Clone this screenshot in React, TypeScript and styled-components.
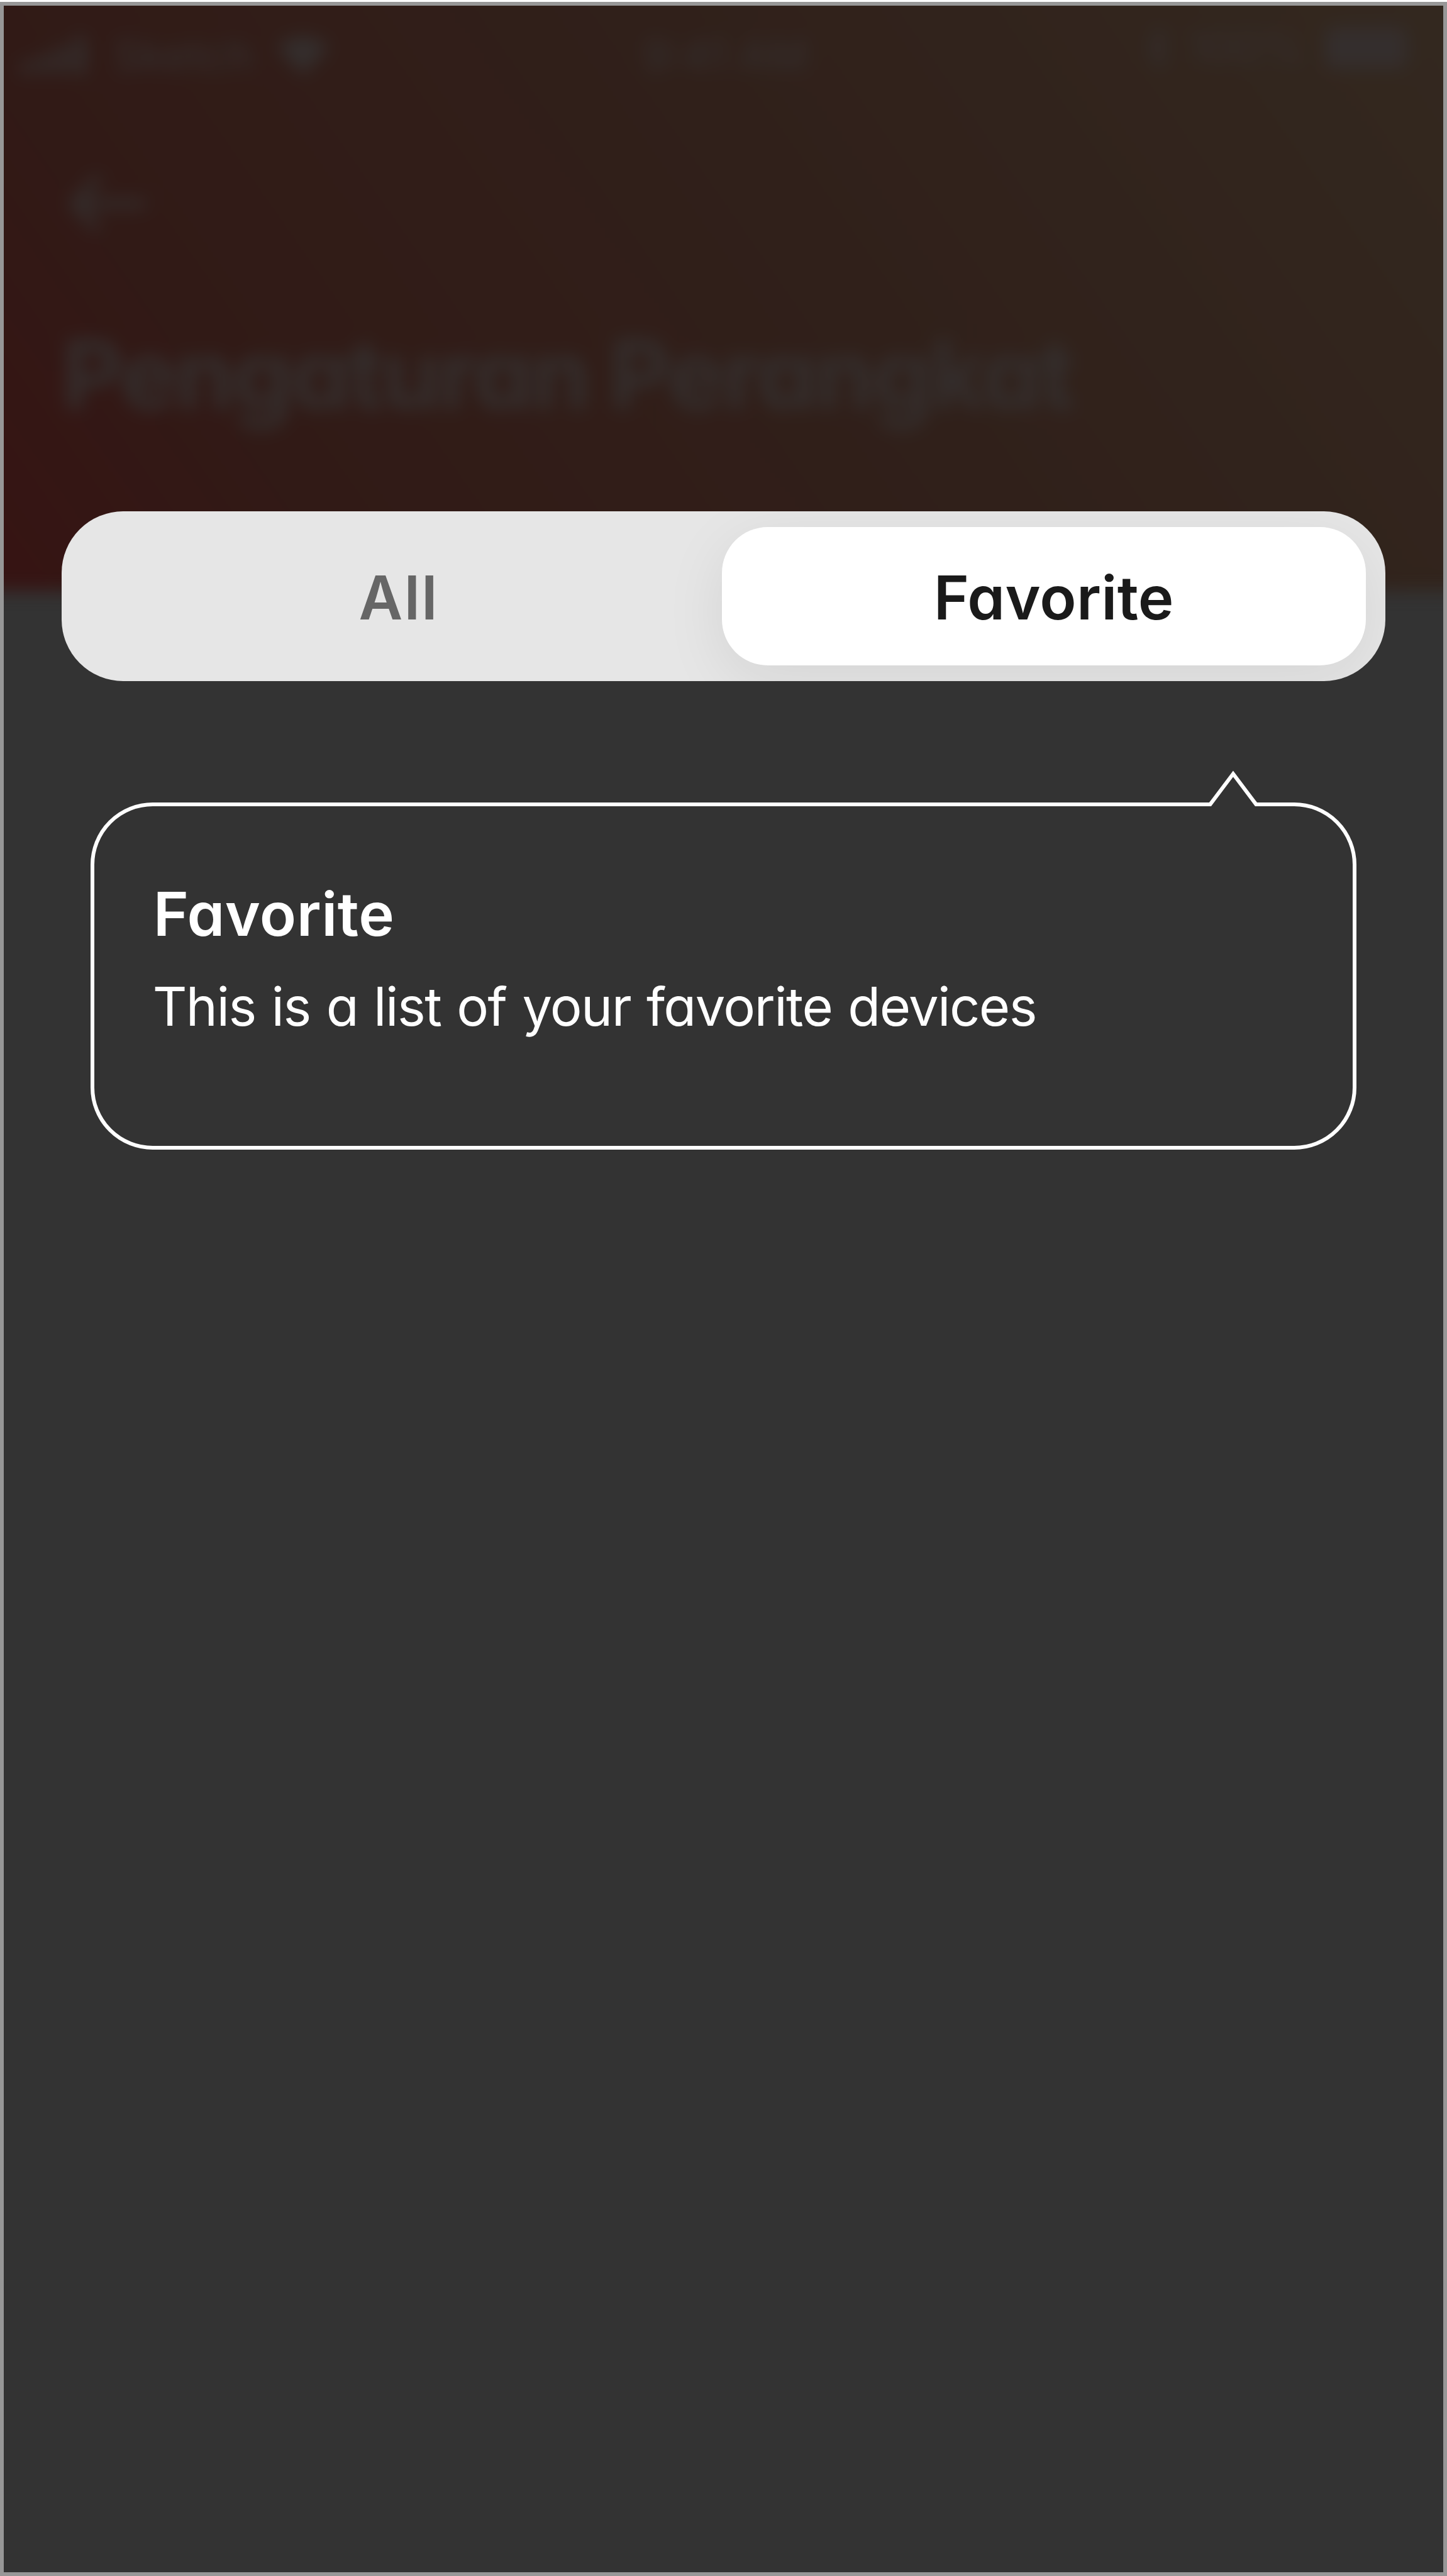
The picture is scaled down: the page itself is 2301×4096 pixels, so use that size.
import React from 'react';
import styled, { createGlobalStyle } from 'styled-components';

const SCALE = 0.9987;
const u = (n: number) => `${+(n * SCALE).toFixed(2)}px`;

const GlobalStyle = createGlobalStyle`
  *, *::before, *::after { box-sizing: border-box; }
  html, body { margin: 0; padding: 0; background: #fff; }
  body { font-family: Inter, "Noto Sans", sans-serif; font-feature-settings: "cv11" 1; }
`;

const Page = styled.div`
  width: 2301px;
  height: 4096px;
  padding-top: 3px;
  background: #fff;
  overflow: hidden;
`;

const Screen = styled.div`
  display: grid;
  grid-template: minmax(0, 1fr) / minmax(0, 1fr);
  height: 100%;
  border: 6px solid #979797;
  background: #333;
`;

const Backdrop = styled.div`
  grid-area: 1 / 1;
  overflow: hidden;
`;

const Header = styled.header`
  margin: ${u(-60)} ${u(-60)} 0;
  height: ${u(991)};
  padding: ${u(60)} ${u(60)} 0;
  background: linear-gradient(55deg, #361413 3%, #311a16 21%, #30201a 56%, #33281f 97%);
  filter: blur(${u(14)});
  color: #342e2d;
`;

const StatusBar = styled.div`
  display: grid;
  grid-template-columns: 1fr auto 1fr;
  align-items: center;
  height: ${u(158)};
  padding: 0 ${u(40)} 0 ${u(24)};
  font: 500 ${u(68)}/1 Inter, sans-serif;
`;

const StatusGroup = styled.div<{ $end?: boolean }>`
  display: flex;
  align-items: center;
  gap: ${p => (p.$end ? u(32) : u(38))};
  justify-content: ${p => (p.$end ? 'flex-end' : 'flex-start')};
  padding-bottom: ${p => (p.$end ? u(24) : '0')};
`;

const Clock = styled.span`
  padding-left: ${u(22)};
`;

const HeaderBody = styled.div`
  display: flex;
  flex-direction: column;
  align-items: flex-start;
  padding: ${u(100)} ${u(92)} 0;
`;

const HeaderTitle = styled.h1`
  margin: ${u(130)} 0 0;
  font-size: ${u(152)};
  line-height: ${u(180)};
  font-weight: 700;
  white-space: nowrap;
  letter-spacing: ${u(-3.4)};
`;

const Content = styled.main`
  grid-area: 1 / 1;
  z-index: 1;
  display: flex;
  flex-direction: column;
  padding: ${u(805)} ${u(92)} 0;
`;

const Tabs = styled.div`
  display: grid;
  grid-template-columns: 1fr ${u(1026)};
  flex: none;
  height: ${u(270)};
  padding: ${u(24.7)} ${u(31)} ${u(24.7)} 0;
  border-radius: ${u(98)};
  background: #e6e6e6;
  overflow: hidden;
`;

const Tab = styled.button<{ $active?: boolean }>`
  border: 0;
  margin: 0;
  padding: ${p => (p.$active ? `${u(6)} 0 0 ${u(32)}` : `${u(6)} 0 0 ${u(23)}`)};
  border-radius: ${u(73)};
  background: ${p => (p.$active ? '#fff' : 'transparent')};
  color: ${p => (p.$active ? '#1a1a1a' : '#666')};
  box-shadow: ${p => (p.$active ? `0 ${u(24)} ${u(98)} rgba(0, 0, 0, 0.08)` : 'none')};
  font-family: inherit;
  font-feature-settings: inherit;
  font-size: ${u(96)};
  line-height: ${u(120)};
  font-weight: 600;
  letter-spacing: ${p => (p.$active ? u(0.3) : u(2.4))};
`;

const Tooltip = styled.section`
  position: relative;
  flex: none;
  margin: ${u(194)} ${u(46)} 0;
  height: ${u(552)};
  border: 6px solid #fff;
  border-radius: ${u(99)};
  padding: ${u(112)} ${u(94)} 0;
  color: #fff;
`;

const Pointer = styled.svg`
  position: absolute;
  top: ${u(-60)};
  right: ${u(141)};
  width: ${u(100)};
  height: ${u(70)};
`;

const TooltipTitle = styled.h2`
  margin: 0;
  font-size: ${u(96)};
  line-height: ${u(120)};
  font-weight: 600;
  letter-spacing: ${u(0.5)};
`;

const TooltipText = styled.p`
  margin: ${u(32)} 0 0 ${u(-1)};
  font-size: ${u(85)};
  line-height: ${u(110)};
  font-weight: 400;
  letter-spacing: ${u(-1.6)};
  word-spacing: ${u(2.7)};
  white-space: nowrap;
`;

const SignalIcon = () => (
  <svg width={u(112)} height={u(60)} viewBox="0 0 112 64" fill="currentColor">
    <rect x="0" y="42" width="20" height="22" rx="5" />
    <rect x="30" y="30" width="20" height="34" rx="5" />
    <rect x="60" y="16" width="20" height="48" rx="5" />
    <rect x="90" y="0" width="20" height="64" rx="5" />
  </svg>
);

const WifiIcon = () => (
  <svg width={u(84)} height={u(62)} viewBox="0 0 92 68" fill="currentColor">
    <path d="M0 20a66 66 0 0 1 92 0L46 68z" />
  </svg>
);

const BluetoothIcon = () => (
  <svg width={u(36)} height={u(66)} viewBox="0 0 36 66" fill="none" stroke="currentColor" strokeWidth="6">
    <path d="M3 18l30 30-15 14V4l15 14L3 48" />
  </svg>
);

const BatteryIcon = () => (
  <svg width={u(150)} height={u(66)} viewBox="0 0 150 68" fill="currentColor">
    <rect width="134" height="68" rx="14" />
    <path d="M140 24q10 10 0 20z" />
  </svg>
);

const BackIcon = () => (
  <svg width={u(140)} height={u(110)} viewBox="0 0 140 110" fill="none" stroke="currentColor" strokeWidth="14">
    <path d="M134 57H22M60 14L20 57l38 41" />
  </svg>
);

export default function App() {
  return (
    <>
      <GlobalStyle />
      <Page>
        <Screen>
          <Backdrop>
            <Header>
              <StatusBar>
                <StatusGroup>
                  <SignalIcon />
                  <span>Sketch</span>
                  <WifiIcon />
                </StatusGroup>
                <Clock>9:41 AM</Clock>
                <StatusGroup $end>
                  <BluetoothIcon />
                  <span>100%</span>
                  <BatteryIcon />
                </StatusGroup>
              </StatusBar>
              <HeaderBody>
                <BackIcon />
                <HeaderTitle>Pengaturan Perangkat</HeaderTitle>
              </HeaderBody>
            </Header>
          </Backdrop>
          <Content>
            <Tabs role="tablist">
              <Tab role="tab">All</Tab>
              <Tab role="tab" $active>Favorite</Tab>
            </Tabs>
            <Tooltip>
              <Pointer viewBox="0 0 100 70">
                <path d="M13 50H87V60H13z" fill="#333" />
                <path d="M0 57H13.5L50 8.5L86.5 57H100" fill="none" stroke="#fff" strokeWidth="6" />
              </Pointer>
              <TooltipTitle>Favorite</TooltipTitle>
              <TooltipText>This is a list of your favorite devices</TooltipText>
            </Tooltip>
          </Content>
        </Screen>
      </Page>
    </>
  );
}
